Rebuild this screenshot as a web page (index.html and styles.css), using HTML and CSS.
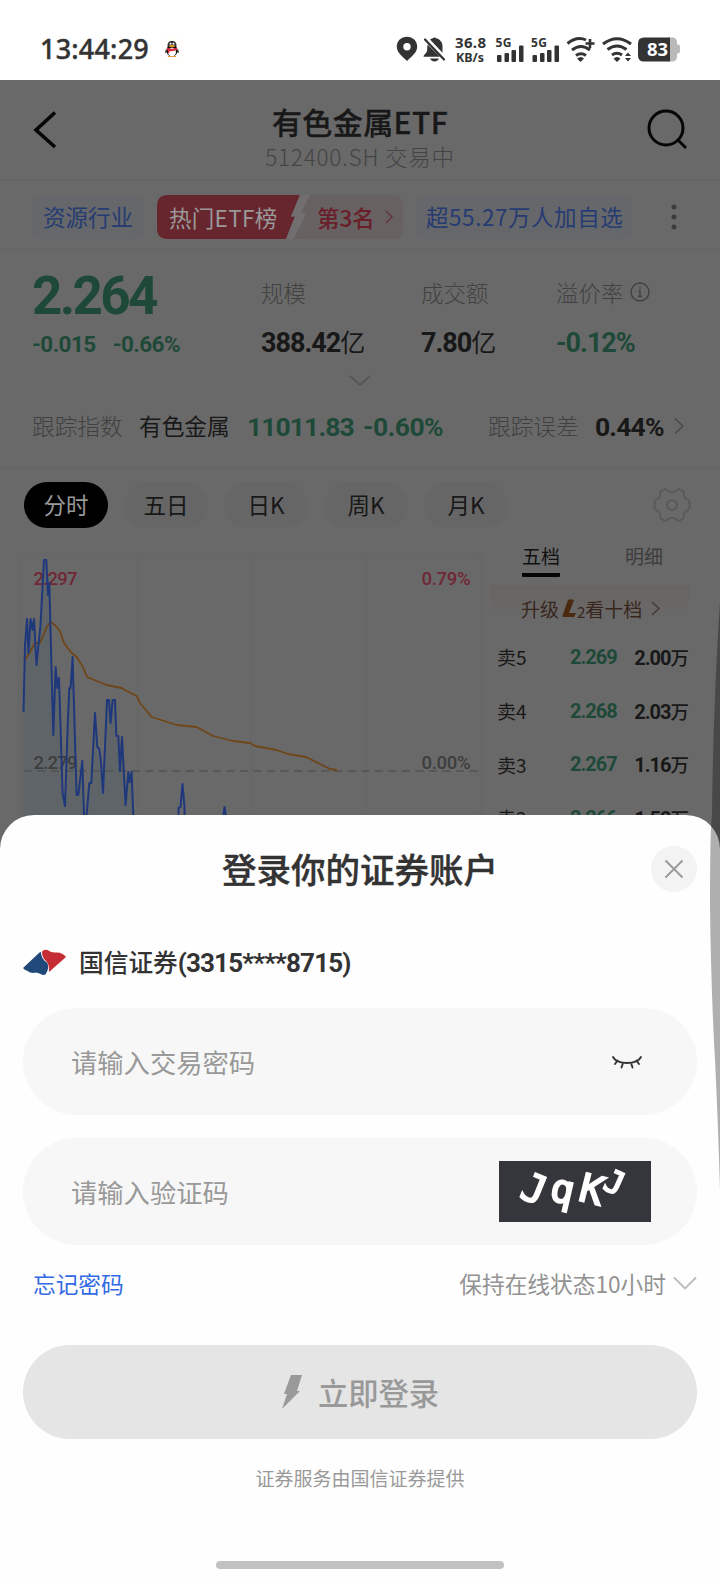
FILE: index.html
```html
<!DOCTYPE html>
<html lang="zh-CN">
<head>
<meta charset="utf-8">
<title>登录你的证券账户</title>
<link rel="stylesheet" href="styles.css">
</head>
<body>
<div class="screen">
  <header class="status">
    <span class="clock">13:44:29</span>
    <svg class="penguin" width="22" height="24" viewBox="0 0 22 24">
      <rect width="22" height="24" rx="3" fill="#fffefa"/>
      <ellipse cx="11" cy="13.5" rx="5.6" ry="6" fill="#111"/>
      <path d="M6.5 9C6.5 5 8.3 4 11 4s4.500 1 4.500 5z" fill="#333"/>
      <path d="M5 12l-1 4 2-1zM17 12l1 4-2-1z" fill="#111"/>
      <ellipse cx="11" cy="15" rx="4" ry="4.300" fill="#fff"/>
      <path d="M6 10.500q5 2.500 10 0v2.200q-4 2-7.500 1.300l-.2 2H7v-2.500l-1-.6z" fill="#df2638"/>
      <circle cx="9.500" cy="6.700" r="1" fill="#fff"/><circle cx="12.500" cy="6.700" r="1" fill="#fff"/>
      <path d="M8.300 9q2.700-1 5.400 0-2.700 1.800-5.400 0zM7 19.500h3.500M11.500 19.500H15" fill="#e59a25" stroke="#e59a25"/>
    </svg>
    <svg class="indicators" width="292" height="32" viewBox="392 32 292 32" fill="#333">
      <path fill-rule="evenodd" d="M407 35.800c-5.800 0-10.200 4.300-10.200 9.800 0 5.700 4.500 9 10.200 14.400 5.700-5.400 10.200-8.700 10.200-14.400 0-5.500-4.400-9.800-10.200-9.800zm0 6.200a3.700 3.700 0 1 1 0 7.400 3.700 3.700 0 0 1 0-7.400z"/>
      <path d="M430 38.500c1-.8 2-1.200 2.700-1.300 1-.9 2.600-.9 3.500 0 4 1 6.300 4 6.300 8v6.500z"/>
      <path d="M427.500 43.500L440 55.800h-16.500c-.2-1.500 2-3 3.200-4.800.9-1.600.3-5 .8-7.500z"/>
      <path d="M430 57.500h9q-1.500 3-4.500 3t-4.500-3z"/>
      <path d="M425 38.500l19 20" stroke="#333" stroke-width="2.300" stroke-linecap="round"/>
      <text class="st" x="455" y="46.800" textLength="31" font-size="15">36.8</text>
      <text class="st" x="456" y="61" textLength="28" lengthAdjust="spacingAndGlyphs" font-size="12.500">KB/s</text>
      <text class="st" x="495.500" y="46" textLength="16" font-size="12">5G</text>
      <text class="st" x="531" y="46" textLength="16" font-size="12">5G</text>
      <g id="bars"><rect x="497" y="54" width="4.500" height="7" rx="1"/><rect x="504.500" y="52" width="4.500" height="9" rx="1"/><rect x="511.500" y="49" width="4.500" height="12" rx="1"/><rect x="519" y="44.500" width="4.500" height="16.500" rx="1"/></g>
      <use href="#bars" x="35.500"/>
      <g fill="none" stroke="#333" stroke-width="3">
        <path d="M567.500 42.500Q577 35 586 39M572 49q9-7 18 0M576 54.500q5-3.500 10 0"/>
        <path d="M585.500 42.500h9M590 38v9" stroke-width="2.600"/>
        <path d="M603 43q14-10.500 28 0M607.500 48.500q9.500-7 19 0M612 54q5-3.500 10 0"/>
      </g>
      <path d="M577 57.500q4-3 7 0l-3.500 3.500zM613.500 57.500q3.500-3 7 0l-3.500 3.500zM625 55l3-3.500 3 3.500zM625 57l3 3.500 3-3.500z"/>
      <path d="M672 36.500q5 0 5 5v2h1q2 0 2 2v5q0 2-2 2h-1v3q0 5-5 5h-4v-24z" fill="#b9b9b9"/>
      <path d="M644 36.500h26v24h-26q-6 0-6-6v-12q0-6 6-6z"/>
      <text class="st" x="647" y="55" textLength="21" font-size="18.500" fill="#fff">83</text>
    </svg>
  </header>

  <main class="quote-page">
    <nav class="titlebar">
      <svg width="64" height="64" viewBox="0 0 64 64" fill="none" stroke="#060606" stroke-width="3.600"><path d="M35 6.500L16 24l19 17"/></svg>
      <div class="titles"><h1>有色金属ETF</h1><p>512400.SH 交易中</p></div>
      <svg width="64" height="64" viewBox="0 0 64 64" fill="none" stroke="#060606" stroke-width="3"><circle cx="30" cy="22" r="17"/><path d="M42 34l8 8"/></svg>
    </nav>

    <section class="tags">
      <span class="tag tag-blue">资源行业</span>
      <span class="rank">
        <svg class="rank-bg" width="246" height="44" viewBox="0 0 246 44">
          <path d="M140 0h96q10 0 10 10v24q0 10-10 10H132z" fill="#676162"/>
          <path d="M11 0H143L134 21.500H138L129 44H11Q0 44 0 33V11Q0 0 11 0z" fill="#67262e"/>
          <path d="M143 0h10l-9 18h6l-14 26h-7l9-22.500h-4z" fill="#706e6e"/>
        </svg>
        <span class="rank-text"><span class="rank-name">热门ETF榜</span><span class="rank-no">第3名</span><svg width="8" height="14" viewBox="0 0 8 14" fill="none" stroke="#66343b" stroke-width="1.500"><path d="M1 1l6 6-6 6"/></svg></span>
      </span>
      <span class="tag tag-blue tag-wide">超55.27万人加自选</span>
      <svg class="more" width="6" height="26" viewBox="0 0 6 26" fill="#3c3c3c"><circle cx="3" cy="3" r="2.500"/><circle cx="3" cy="13" r="2.500"/><circle cx="3" cy="23" r="2.500"/></svg>
    </section>

    <section class="quote">
      <div class="metrics">
        <div><div class="price num green">2.264</div><div class="change num green"><span>-0.015</span><span>-0.66%</span></div></div>
        <div><div class="label">规模</div><div class="value num">388.42<span class="unit">亿</span></div></div>
        <div><div class="label">成交额</div><div class="value num">7.80<span class="unit">亿</span></div></div>
        <div><div class="label">溢价率<svg width="20" height="20" viewBox="0 0 20 20" fill="none" stroke="#404040" stroke-width="1.400"><circle cx="10" cy="10" r="9"/><path d="M10 5v2M8.500 9H10v5.500M8 14.500h4"/></svg></div><div class="value num green">-0.12%</div></div>
      </div>
      <svg class="expand" width="24" height="13" viewBox="0 0 24 13" fill="none" stroke="#535353" stroke-width="1.500"><path d="M1.500 1.500L12 11 22.500 1.500"/></svg>
      <div class="index-row">
        <span class="muted">跟踪指数</span><span>有色金属</span><span class="num green c3">11011.83</span><span class="num green c4">-0.60%</span><span class="muted">跟踪误差</span><span class="num c6">0.44%</span>
        <svg width="10" height="18" viewBox="0 0 10 18" fill="none" stroke="#484848" stroke-width="1.500"><path d="M1 1.500L9 9l-8 7.500"/></svg>
      </div>
    </section>

    <section class="periods">
      <span class="pill active">分时</span><span class="pill">五日</span><span class="pill">日K</span><span class="pill">周K</span><span class="pill">月K</span>
      <svg class="gear" width="38" height="38" viewBox="0 0 38 38" fill="none" stroke="#585858" stroke-width="1.700" stroke-linejoin="round"><path d="M12 3q1.500 0 3 2 4 2 8 0 1.500-2 3-2l4.500 2.800q.8 1 0 3.500 1 3.400 4 4.200 1.500.7 2 2.500v6q-.5 1.800-2 2.500-3 .8-4 4.200.8 2.500 0 3.500L26 35q-1.500 0-3-2-4-2-8 0-1.500 2-3 2l-4.500-2.800q-.8-1 0-3.500-1-3.400-4-4.200-1.500-.7-2-2.500v-6q.5-1.800 2-2.500 3-.8 4-4.200-.8-2.500 0-3.500z"/><circle cx="19" cy="19" r="5"/></svg>
    </section>

    <section class="market">
      <svg class="chart" width="484" height="300" viewBox="0 549 484 300">
        <path d="M17 552h466v7H23v291h-6z" fill="#676767"/>
        <path d="M138 559v291M251 559v291M366 559v291" stroke="#676767" stroke-width="2"/>
        <path d="M481 559v291" stroke="#676767" stroke-width="3"/>
        <path d="M23.500 850V712L25 645 27 619 30 640 34 619 36.500 665 40.500 625 44 560H46.300L49.300 583 53.300 735 55.600 667 59 678 62.600 793 65 806 69.300 688 72.600 657 76.600 795H78.300L82.300 761 84 815V850H87V815L89.300 783H91.300L95 713 97.300 747 101 762 103 793 107 700H109L110.600 723 112.600 700H115L116.300 736 120 771 122 737 125.600 805 128.300 772H131.600L133.300 815V850z" fill="#5f6468"/>
        <path d="M24 771h456" stroke="#515151" stroke-width="1.500" stroke-dasharray="8 5.500"/>
        <g class="axis"><text x="33.500" y="584.500" textLength="44" fill="#702735">2.297</text><text x="421.500" y="584.500" textLength="49" fill="#702735">0.79%</text><text x="33.500" y="768.500" textLength="44" fill="#3d3d3d">2.279</text><text x="421.500" y="768.500" textLength="49" fill="#3d3d3d">0.00%</text></g>
        <path d="M25 660L30 652 35 643H40L46.700 627 50.700 622 55 625 60 631 64 643 71.700 653 76.700 657 83 667 87 677 106.700 685 121.700 688 126.700 691 136.700 696 140 703 151.700 717 176.700 725 196.700 727 213 736 233 741 250 743 255 746 276.700 750 288 754 306 757 320 764 330 769 337 770" fill="none" stroke="#704618" stroke-width="1.800" stroke-linejoin="round"/>
        <path d="M23.500 712L25 645 27 619 28.500 653 30.500 619 32.500 630 34 619 36.500 665 40.500 625 44 560H46.300L48 595 49.300 583 53.300 735 55.600 667 57.300 688 59 678 62.600 793 65 806 67.600 728 69.300 688H70.600L72.600 657 76.600 795H78.300L82.300 761 84 815V850M86.600 850V815L89.300 783H91.300L95 713 97.300 747 99.300 749 101 762 103 793 107 700H109L110.600 723 112.600 700H115L116.300 736H118.300L120 771 122 737 125.600 805 128.300 772 129.600 782 131.600 772 133.300 815V850M178.500 850v-42l2-1 2-23 2 23v43M223 850v-32l1.500-11 2 12v31" fill="none" stroke="#1f387c" stroke-width="2" stroke-linejoin="round"/>
      </svg>
      <aside class="book">
        <div class="book-tabs"><span class="on">五档</span><span>明细</span></div>
        <div class="upgrade">升级<svg width="15" height="19" viewBox="0 0 15 19" fill="#4a290f"><path d="M6 1q2-1.500 6 0L7 14h7l-2 4H1q-1 0 0-3z"/></svg><small>2</small>看十档<svg class="go" width="9" height="15" viewBox="0 0 9 15" fill="none" stroke="#453830" stroke-width="1.400"><path d="M1 1l7 6.500L1 14"/></svg></div>
        <div class="level"><span>卖5</span><span class="num green">2.269</span><span class="num vol">2.00<b>万</b></span></div>
        <div class="level"><span>卖4</span><span class="num green">2.268</span><span class="num vol">2.03<b>万</b></span></div>
        <div class="level"><span>卖3</span><span class="num green">2.267</span><span class="num vol">1.16<b>万</b></span></div>
        <div class="level"><span>卖2</span><span class="num green">2.266</span><span class="num vol">1.52<b>万</b></span></div>
      </aside>
    </section>
  </main>

  <section class="sheet">
    <div class="sheet-head"><h2>登录你的证券账户</h2>
      <svg class="close" width="46" height="46" viewBox="0 0 46 46"><circle cx="23" cy="23" r="23" fill="#f3f3f3"/><path d="M14.500 14.500l17 17M31.500 14.500l-17 17" stroke="#999" stroke-width="1.900"/></svg>
    </div>
    <div class="account">
      <svg width="43" height="27" viewBox="0 0 43 27"><path d="M16.500 3.500l1.500-.5q0 7 6 10.500 3 5-1.500 12-2 1-5-.5-4-2.500-7-1-4 0-6-2-3-1-4.500-3z" fill="#204878"/><path d="M19 2.500Q21 0 24.500 1q4 3 8.500 2.500 6-.5 10 4.500L26 23q.5-8-3-11-4-3-4-9.500z" fill="#c62c33"/></svg>
      <span>国信证券<span class="num acct">(3315****8715)</span></span>
    </div>
    <div class="field"><span>请输入交易密码</span>
      <svg class="eye" width="32" height="14" viewBox="0 0 32 14" fill="none" stroke="#333" stroke-width="1.900" stroke-linecap="round"><path d="M2 2q3 6 14 6T30 2M6.500 5.500L4 9M12 8l-1.500 4.500M20 8l1.500 4.500M25.500 5.500l2.500 3.500"/></svg>
    </div>
    <div class="field"><span>请输入验证码</span>
      <svg class="captcha" width="152" height="61" viewBox="0 0 152 61"><rect width="152" height="61" fill="#34363b"/><g class="code"><text x="-11" y="12" transform="translate(34 29) rotate(22)">J</text><text x="-10" y="9" transform="translate(61 32) rotate(13)">q</text><text x="-11" y="13" transform="translate(92 29) rotate(14)">K</text><text x="-9" y="10" font-size="31" transform="translate(115 22) rotate(24)">J</text></g></svg>
    </div>
    <div class="options"><span class="forgot">忘记密码</span><span class="keep">保持在线状态10小时<svg width="24" height="15" viewBox="0 0 24 15" fill="none" stroke="#bbb" stroke-width="1.800"><path d="M1 1.500l11 11 11-11"/></svg></span></div>
    <div class="submit"><svg width="22" height="34" viewBox="0 0 22 34" fill="#999"><path d="M10 0h11l-5 16h3L1 34l5-15H3z"/></svg><span>立即登录</span></div>
    <p class="provider">证券服务由国信证券提供</p>
    <div class="home"></div>
  </section>
  <svg class="edge" width="12" height="590" viewBox="0 0 12 590"><path d="M12 0Q5 110 4 215Q2 230 2 305Q3 390 7 460Q10 520 12 590z" fill="#000" fill-opacity=".31"/></svg>
</div>
</body>
</html>
```

FILE: styles.css
```css
* { box-sizing: border-box; }
body { margin: 0; background: #fff; }
h1, h2, p { margin: 0; }
svg { display: block; flex: none; }
.screen { position: relative; width: 720px; height: 1584px; overflow: hidden; font-family: "Noto Sans CJK SC", sans-serif; color: #333; white-space: nowrap; }
.num { font-family: Roboto, "Noto Sans CJK SC", sans-serif; font-weight: 700; letter-spacing: -.04em; }
.green { color: #1e4938; }
.muted { color: #414141; }

.status { height: 80px; display: flex; align-items: center; padding: 17px 36px 0 40px; }
.clock { font: 500 27px/30px "Noto Sans", sans-serif; color: #333; letter-spacing: .2px; -webkit-text-stroke: .4px; }
.penguin { margin-left: 12px; }
.indicators { margin-left: auto; }
.st { font-family: "Noto Sans", sans-serif; font-weight: 700; }

.quote-page { height: 770px; overflow: hidden; background: #696969; color: #181818; }
.titlebar { height: 101px; padding: 24px 20px 0; display: flex; justify-content: space-between; border-bottom: 2px solid #656565; }
.titlebar > svg { margin-top: 2px; }
.titles { text-align: center; }
.titles h1 { font-size: 30px; line-height: 34px; font-weight: 500; letter-spacing: .4px; -webkit-text-stroke: .3px; }
.titles p { font-size: 22.5px; line-height: 34px; margin-top: 1px; color: #444; font-weight: 300; letter-spacing: .8px; }

.tags { height: 70px; padding: 14px 43px 0 32px; display: flex; align-items: flex-start; font-size: 22.500px; border-bottom: 3px solid #666; }
.tag { height: 44px; line-height: 43px; border-radius: 10px; background: #65676a; color: #263b72; padding: 0 11px; }
.rank { position: relative; height: 44px; width: 246px; margin: 0 12px 0 13px; }
.rank-bg { position: absolute; inset: 0; }
.rank-text { position: relative; display: flex; align-items: center; height: 43px; padding-left: 12px; }
.rank-name { color: #999; width: 148px; letter-spacing: .3px; }
.rank-no { color: #6a1e29; font-weight: 500; width: 68px; }
.tag-wide { width: 218px; letter-spacing: .55px; }
.more { margin: 9px 0 0 auto; }

.quote { height: 219px; border-bottom: 4px solid #666; padding: 18px 0 0 32px; }
.metrics { display: grid; grid-template-columns: 229px 160px 135px 1fr; height: 102px; }
.price { font-size: 53px; line-height: 54px; letter-spacing: -.05em; }
.change { display: flex; gap: 17px; font-size: 22.500px; line-height: 28px; margin-top: 7px; letter-spacing: -.025em; }
.label { display: flex; align-items: center; gap: 6px; font-size: 22.500px; line-height: 34px; padding-top: 6px; color: #414141; font-weight: 300; }
.value { font-size: 27px; line-height: 34px; margin-top: 17px; letter-spacing: -.038em; }
.unit { font-size: 25px; font-weight: 400; letter-spacing: 0; }
.expand { margin: 3px 0 0 316px; }
.index-row { display: grid; grid-template-columns: 107px 108px 116px 125px 107px 79px 10px; align-items: center; font-size: 22.700px; line-height: 34px; margin-top: 21px; }
.index-row .num { font-size: 26.500px; padding-top: 2px; letter-spacing: -.032em; }
.index-row .muted { font-weight: 300; }
.index-row .c3 { letter-spacing: -.035em; }
.index-row .c4 { letter-spacing: -.02em; }

.periods { height: 79px; display: flex; padding: 12px 29px 0 24px; gap: 16px; }
.pill { width: 84px; height: 46px; border-radius: 23px; line-height: 45px; text-align: center; font-size: 22.500px; background: #666; }
.pill.active { background: #000; color: #999; }
.gear { margin: 4px 0 0 auto; }

.market { display: grid; grid-template-columns: 484px 1fr; }
.axis { font: 500 18.500px Roboto, sans-serif; }
.book { padding: 0 31px 0 6px; }
.book-tabs { height: 36px; display: flex; justify-content: space-between; padding: 0 26px 0 32px; font-size: 19px; line-height: 24px; margin-top: -5px; color: #3c3c3c; }
.book-tabs .on { height: 33px; border-bottom: 4px solid #060606; border-radius: 1px; color: #121212; }
.upgrade { height: 36px; display: flex; align-items: center; margin-top: 5px; padding: 11px 0 0 31px; font-size: 19px; background: linear-gradient(#676461, #696766 50%, #696969); color: #38261c; }
.upgrade svg { margin-left: 3px; }
.upgrade small { font-size: 15px; padding-top: 5px; }
.upgrade svg.go { margin-left: 9px; }
.level { display: grid; grid-template-columns: 73px 48px 1fr; align-items: center; height: 53.700px; padding-left: 7px; font-size: 19px; }
.level:nth-child(3) { margin-top: 9px; }
.level .num { font-size: 20px; letter-spacing: -.05em; }
.level .vol { text-align: right; }
.level b { font-size: 18.500px; font-weight: 500; letter-spacing: 0; }

.sheet { position: relative; margin-top: -35px; height: 769px; background: #fefefe; border-radius: 34px 34px 0 0; padding: 31px 23px 0; }
.sheet-head { position: relative; height: 46px; text-align: center; }
.sheet-head h2 { font-size: 34.500px; line-height: 44px; font-weight: 500; -webkit-text-stroke: .4px; }
.close { position: absolute; right: 0; top: 0; }
.account { display: flex; align-items: center; gap: 13px; height: 40px; margin-top: 50px; font-size: 24.700px; line-height: 38px; font-weight: 500; }
.acct { font-size: 26px; letter-spacing: -.033em; }
.field { height: 107px; border-radius: 54px; background: #f7f7f7; display: flex; align-items: center; justify-content: space-between; padding: 0 46px 0 48px; font-size: 26.300px; color: #999; margin-top: 26px; }
.field + .field { margin-top: 23px; }
.eye { margin-right: 8px; }
.code { font: 39px "DejaVu Sans Mono", monospace; fill: #fff; stroke: #fff; stroke-width: 2px; filter: blur(.5px); }
.options { height: 40px; margin-top: 18px; padding-left: 10px; display: flex; justify-content: space-between; align-items: center; font-size: 22.700px; }
.forgot { color: #3269e4; }
.keep { display: flex; align-items: center; gap: 7px; color: #929292; }
.submit { height: 94px; margin-top: 42px; border-radius: 47px; background: #e5e5e5; display: flex; align-items: center; justify-content: center; gap: 15px; color: #999; font-size: 30.300px; font-weight: 500; }
.provider { margin-top: 24px; text-align: center; font-size: 19px; line-height: 30px; color: #999; }
.home { width: 288px; height: 8px; border-radius: 4px; background: #c2c2c2; margin: 68px auto 0; }
.edge { position: absolute; right: 0; top: 600px; }
```
